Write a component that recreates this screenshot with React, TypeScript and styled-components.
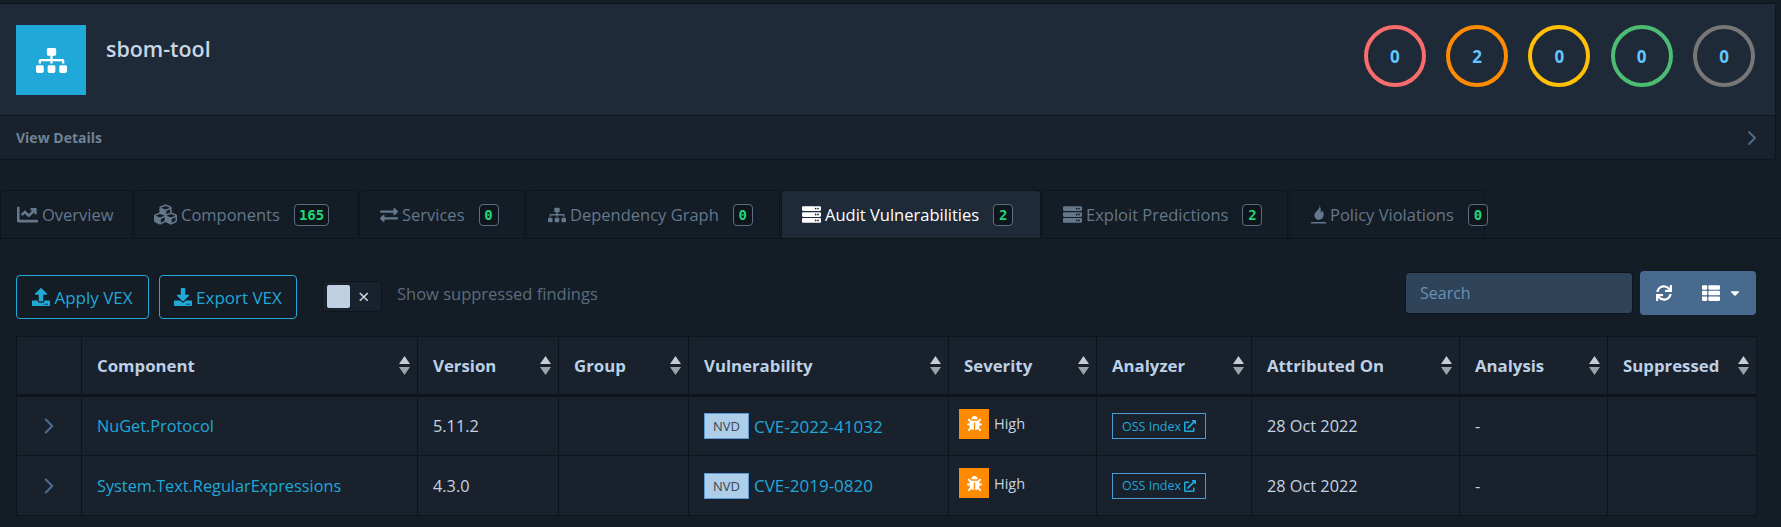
import React from "react"
import styled, { createGlobalStyle } from "styled-components"
import { ChevronRight } from "lucide-react"
import {
  FaBug,
  FaChartLine,
  FaCubes,
  FaDownload,
  FaExchangeAlt,
  FaExternalLinkAlt,
  FaServer,
  FaSitemap,
  FaSync,
  FaThList,
  FaUpload,
  FaCaretDown,
} from "react-icons/fa"

const FONT = `"Open Sans", "Noto Sans", sans-serif`

const GlobalStyle = createGlobalStyle`
  html, body {
    margin: 0;
    padding: 0;
    background: #141c26;
    font-family: ${FONT};
    overflow: hidden;
  }
`

const Page = styled.div`
  width: 1781px;
  height: 527px;
  padding-top: 3px;
  box-sizing: border-box;
  background: #141c26;
`

const ProjectCard = styled.section`
  width: 1776px;
  height: 157px;
  box-sizing: border-box;
  border: 1px solid #0e141b;
  border-left: 0;
  border-radius: 0 4px 4px 0;
  background: #18212c;
`

const CardHeader = styled.div`
  height: 112px;
  box-sizing: border-box;
  padding: 21px 20px 0 16px;
  display: flex;
  justify-content: space-between;
  background: #1e2a38;
  border-bottom: 1px solid #0e141b;
`

const Identity = styled.div`
  display: flex;
  gap: 20px;
`

const ProjectIcon = styled.div`
  width: 70px;
  height: 70px;
  background: #20a8d8;
  color: #fff;
  font-size: 31px;
  display: flex;
  align-items: center;
  justify-content: center;
`

const ProjectName = styled.h1`
  margin: 11px 0 0;
  font-size: 21.4px;
  line-height: 26px;
  font-weight: 600;
  color: #c8d6e5;
`

const Metrics = styled.div`
  display: flex;
  gap: 20.3px;
`

const Metric = styled.div<{ $color: string }>`
  width: 62px;
  height: 62px;
  box-sizing: border-box;
  border: 4px solid ${(p) => p.$color};
  border-radius: 50%;
  display: flex;
  align-items: center;
  justify-content: center;
  font-size: 17px;
  font-weight: 700;
  color: #63c6ff;
`

const CardFooter = styled.div`
  height: 43px;
  box-sizing: border-box;
  padding: 0 11px 0 16px;
  display: flex;
  align-items: center;
  justify-content: space-between;
  font-size: 14px;
  font-weight: 700;
  color: #6f8296;
  svg {
    color: #4d6a88;
  }
`

const Tabs = styled.nav`
  margin-top: 30px;
  height: 48px;
  display: flex;
  gap: 1px;
  border-bottom: 1px solid #0e141b;
`

const Tab = styled.div<{ $width: number; $pad: number; $active?: boolean }>`
  width: ${(p) => p.$width}px;
  height: 48px;
  box-sizing: border-box;
  padding-left: ${(p) => p.$pad}px;
  display: flex;
  align-items: center;
  gap: 4px;
  white-space: nowrap;
  border: 1px solid #0e141b;
  border-bottom: 0;
  border-radius: 4px 4px 0 0;
  font-size: 16.5px;
  background: ${(p) => (p.$active ? "#1e2a38" : "#141c26")};
  color: ${(p) => (p.$active ? "#ffffff" : "#64778b")};
  svg {
    flex: none;
  }
`

const TabCount = styled.span`
  margin-left: 10px;
  min-width: 10px;
  height: 20px;
  padding: 0 4px;
  border: 1px solid #5c6f82;
  border-radius: 4px;
  background: #0f151c;
  color: #1fd87a;
  font-family: "DejaVu Sans Mono", monospace;
  font-size: 14px;
  font-weight: 700;
  line-height: 20px;
  text-align: center;
`

const Toolbar = styled.div`
  margin-top: 36px;
  padding: 0 25px 0 16px;
  height: 44px;
  display: flex;
  align-items: center;
`

const OutlineButton = styled.button<{ $width: number }>`
  width: ${(p) => p.$width}px;
  height: 44px;
  margin-right: 10px;
  padding: 0;
  display: flex;
  align-items: center;
  justify-content: center;
  gap: 4px;
  background: transparent;
  border: 1px solid #20a8d8;
  border-radius: 4px;
  color: #20a8d8;
  font-family: ${FONT};
  font-size: 17px;
  svg {
    font-size: 18px;
  }
`

const Toggle = styled.div`
  width: 60px;
  height: 31px;
  margin: 0 0 1px 15px;
  box-sizing: border-box;
  padding: 3px 4px;
  display: flex;
  align-items: center;
  gap: 8px;
  background: #18212c;
  border: 1px solid #0e141b;
  border-radius: 4px;
  color: #d5dde6;
  font-size: 20px;
`

const ToggleKnob = styled.span`
  width: 23px;
  height: 23px;
  border-radius: 2px;
  background: #c0d0e2;
`

const ToggleLabel = styled.span`
  margin: 0 0 8px 15px;
  font-size: 16.5px;
  color: #5d6c7c;
  flex: 1;
`

const Search = styled.input`
  width: 228px;
  height: 42px;
  margin-bottom: 8px;
  box-sizing: border-box;
  padding: 0 14px;
  background: #2f4459;
  border: 1px solid #0e141b;
  border-radius: 4px;
  font-family: ${FONT};
  font-size: 16px;
  &::placeholder {
    color: #6b8fb5;
    opacity: 1;
  }
`

const ToolGroup = styled.div`
  width: 116px;
  height: 44px;
  margin: 0 0 8px 7px;
  display: flex;
  align-items: center;
  background: #486a8e;
  border-radius: 4px;
  color: #fff;
  font-size: 16px;
  padding-left: 16px;
  box-sizing: border-box;
  gap: 30px;
`

const ViewToggle = styled.span`
  display: flex;
  align-items: center;
  gap: 8px;
  font-size: 18px;
`

const TableWrap = styled.div`
  margin: 17px 0 0 16px;
  width: 1740px;
`

const Table = styled.table`
  width: 1740px;
  table-layout: fixed;
  border-collapse: collapse;
  background: #18212c;
  font-size: 16.3px;
  color: #c6d3e0;
`

const Th = styled.th`
  height: 59px;
  box-sizing: border-box;
  padding: 0 15px;
  text-align: left;
  font-weight: 700;
  font-size: 16.8px;
  color: #bcd0e6;
  border: 1px solid #0e141b;
  border-bottom: 3px solid #0e141b;
  position: relative;
  white-space: nowrap;
`

const SortMark = styled.svg`
  position: absolute;
  right: 7px;
  top: 19px;
  width: 11px;
  height: 19px;
`

const Td = styled.td`
  height: 60px;
  box-sizing: border-box;
  padding: 0 15px;
  border: 1px solid #0e141b;
`

const ExpandCell = styled(Td)`
  text-align: center;
  color: #4a6c90;
  padding: 0;
  svg {
    display: block;
    margin: 0 auto;
  }
`

const Link = styled.a`
  color: #20a8d8;
`

const VulnCell = styled.div`
  display: flex;
  align-items: center;
  gap: 5px;
  font-size: 17px;
`

const SourceBadge = styled.span`
  width: 45px;
  height: 26px;
  box-sizing: border-box;
  display: flex;
  align-items: center;
  justify-content: center;
  background: #aecde8;
  border: 1px solid #5b9bd5;
  color: #3c4650;
  font-size: 13px;
`

const SeverityCell = styled.div`
  display: flex;
  align-items: center;
  gap: 5px;
  font-size: 14.5px;
  margin: -5px 0 0 -5px;
`

const SeverityIcon = styled.span`
  width: 30px;
  height: 30px;
  background: #ff8c00;
  color: #fff;
  display: flex;
  align-items: center;
  justify-content: center;
  font-size: 15px;
`

const AnalyzerLabel = styled.span`
  display: inline-flex;
  align-items: center;
  justify-content: center;
  gap: 3px;
  width: 94px;
  height: 26px;
  box-sizing: border-box;
  border: 1px solid #4a9ad4;
  color: #20a8d8;
  font-size: 12.5px;
  vertical-align: middle;
  svg {
    font-size: 12px;
  }
`

const columns = [
  { title: "", width: 65 },
  { title: "Component", width: 336 },
  { title: "Version", width: 141 },
  { title: "Group", width: 130 },
  { title: "Vulnerability", width: 260 },
  { title: "Severity", width: 148 },
  { title: "Analyzer", width: 155 },
  { title: "Attributed On", width: 208 },
  { title: "Analysis", width: 148 },
  { title: "Suppressed", width: 149 },
]

const metrics = [
  { color: "#f86c6b", value: 0 },
  { color: "#ff8c00", value: 2 },
  { color: "#ffc107", value: 0 },
  { color: "#4dbd74", value: 0 },
  { color: "#777777", value: 0 },
]

// fire with a line under it, the icon package one has no base
const PolicyIcon = () => (
  <svg width="15" height="21" viewBox="0 0 15 21" fill="currentColor">
    <path d="M8.5 1c.6 2.4-.6 3.6-2.3 5.4C4.5 8.200 3.400 9.700 3.400 11.500c0 2.300 1.800 4.100 4.100 4.500l3-1c1.400-1 2.200-2.500 2.200-4.200 0-2-1-3.200-1.500-4.200-.3 1-.8 1.500-1.500 1.800.5-2.900-.2-5.400-1.700-7.400z" />
    <rect x="0" y="18" width="15" height="1.500" />
  </svg>
)

const tabs = [
  { label: "Overview", icon: <FaChartLine size={21} />, width: 133, pad: 16 },
  { label: "Components", icon: <FaCubes size={23} />, width: 224, pad: 19, count: 165 },
  { label: "Services", icon: <FaExchangeAlt size={18} />, width: 166, pad: 20, count: 0 },
  { label: "Dependency Graph", icon: <FaSitemap size={18} />, width: 254, pad: 21, count: 0 },
  { label: "Audit Vulnerabilities", icon: <FaServer size={19} />, width: 260, pad: 20, count: 2, active: true },
  { label: "Exploit Predictions", icon: <FaServer size={19} />, width: 246, pad: 20, count: 2 },
  { label: "Policy Violations", icon: <PolicyIcon />, width: 196, pad: 21, count: 0 },
]

const findings = [
  { name: "NuGet.Protocol", version: "5.11.2", cve: "CVE-2022-41032" },
  { name: "System.Text.RegularExpressions", version: "4.3.0", cve: "CVE-2019-0820" },
]

export default function App() {
  return (
    <Page>
      <GlobalStyle />
      <ProjectCard>
        <CardHeader>
          <Identity>
            <ProjectIcon>
              <FaSitemap />
            </ProjectIcon>
            <ProjectName>sbom-tool</ProjectName>
          </Identity>
          <Metrics>
            {metrics.map((m, i) => (
              <Metric key={i} $color={m.color}>
                {m.value}
              </Metric>
            ))}
          </Metrics>
        </CardHeader>
        <CardFooter>
          View Details
          <ChevronRight size={24} strokeWidth={2} />
        </CardFooter>
      </ProjectCard>
      <Tabs>
        {tabs.map((t) => (
          <Tab key={t.label} $width={t.width} $pad={t.pad} $active={t.active}>
            {t.icon}
            {t.label}
            {t.count !== undefined && <TabCount>{t.count}</TabCount>}
          </Tab>
        ))}
      </Tabs>
      <Toolbar>
        <OutlineButton $width={133}>
          <FaUpload />
          Apply VEX
        </OutlineButton>
        <OutlineButton $width={138}>
          <FaDownload />
          Export VEX
        </OutlineButton>
        <Toggle>
          <ToggleKnob />×
        </Toggle>
        <ToggleLabel>Show suppressed findings</ToggleLabel>
        <Search placeholder="Search" />
        <ToolGroup>
          <FaSync />
          <ViewToggle>
            <FaThList />
            <FaCaretDown size={14} />
          </ViewToggle>
        </ToolGroup>
      </Toolbar>
      <TableWrap>
        <Table>
          <colgroup>
            {columns.map((c, i) => (
              <col key={i} width={c.width} />
            ))}
          </colgroup>
          <thead>
            <tr>
              {columns.map((c, i) => (
                <Th key={i}>
                  {c.title}
                  {c.title && (
                    <SortMark viewBox="0 0 11 19">
                      <path d="M5.500 0L11 8H0z" fill="#c6ccd2" />
                      <path d="M0 11h11l-5.500 8z" fill="#9aa2aa" />
                    </SortMark>
                  )}
                </Th>
              ))}
            </tr>
          </thead>
          <tbody>
            {findings.map((f) => (
              <tr key={f.cve}>
                <ExpandCell>
                  <ChevronRight size={26} strokeWidth={2} />
                </ExpandCell>
                <Td>
                  <Link>{f.name}</Link>
                </Td>
                <Td>{f.version}</Td>
                <Td />
                <Td>
                  <VulnCell>
                    <SourceBadge>NVD</SourceBadge>
                    <Link>{f.cve}</Link>
                  </VulnCell>
                </Td>
                <Td>
                  <SeverityCell>
                    <SeverityIcon>
                      <FaBug />
                    </SeverityIcon>
                    High
                  </SeverityCell>
                </Td>
                <Td>
                  <AnalyzerLabel>
                    OSS Index
                    <FaExternalLinkAlt />
                  </AnalyzerLabel>
                </Td>
                <Td>28 Oct 2022</Td>
                <Td>-</Td>
                <Td />
              </tr>
            ))}
          </tbody>
        </Table>
      </TableWrap>
    </Page>
  )
}
